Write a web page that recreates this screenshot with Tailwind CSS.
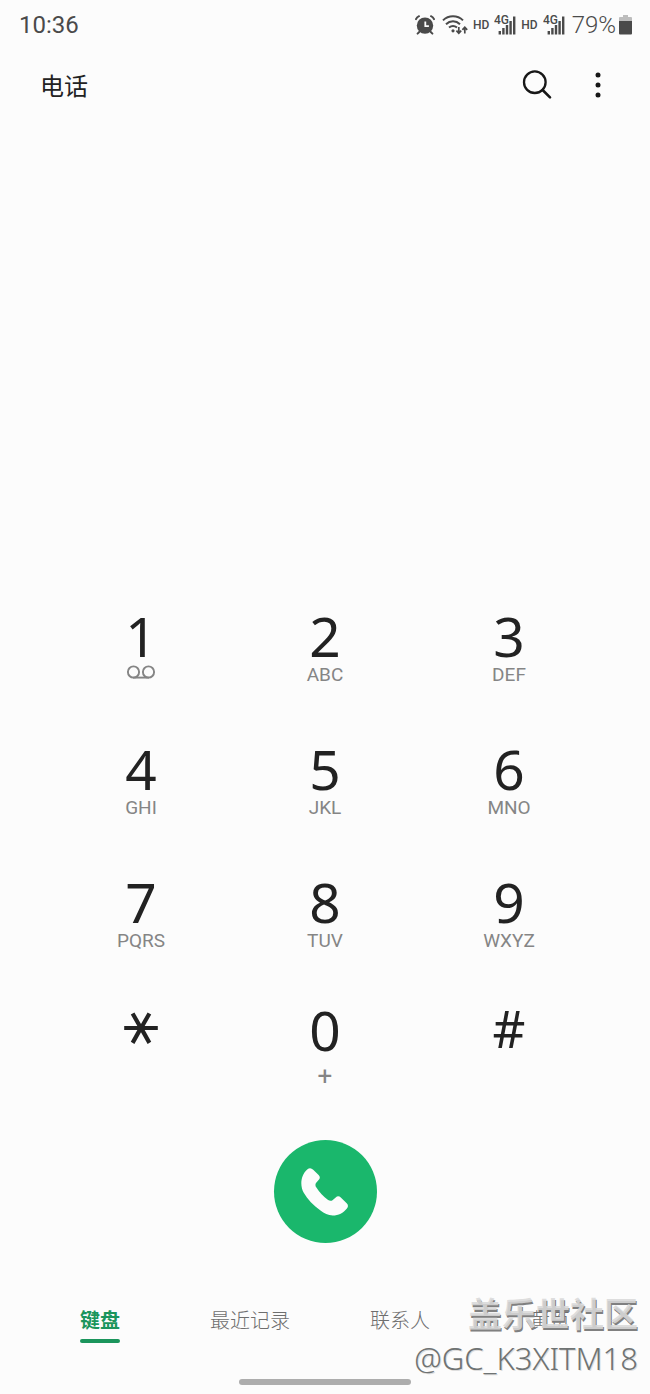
<!DOCTYPE html>
<html lang="zh-CN">
  <head>
    <meta charset="UTF-8" />
    <title>电话</title>
    <meta name="viewport" content="width=device-width, initial-scale=1.0" />
    <script src="https://cdn.jsdelivr.net/npm/@tailwindcss/browser@4"></script>
  </head>
  <body class="bg-[#fcfcfc] font-[Roboto,'Noto_Sans_CJK_SC',sans-serif] text-[#222222]">
    <div class="relative flex min-h-screen flex-col">
      <!-- Status bar -->
      <div class="flex h-[50px] items-center justify-between pl-[19px] pr-[18px] text-2xl text-[#4a4a4a]">
        <span>10:36</span>
        <div class="flex items-center">
          <svg class="mr-[7px] h-5 w-5" viewBox="0 0 20 20" fill="none" stroke="currentColor" stroke-linecap="round">
            <circle cx="10" cy="10.6" r="8.2" fill="currentColor" stroke="none" />
            <path d="M10.3 6.4v4.8h3.6" stroke="#fcfcfc" stroke-width="1.8" stroke-linecap="butt" />
            <path d="M1 4.2C1.6 2.8 2.6 1.8 4 1.2M19 4.2C18.4 2.8 17.4 1.8 16 1.2M4.2 17l-1.6 1.6M15.8 17l1.6 1.6" stroke-width="2" />
          </svg>
          <svg class="mr-[5px] h-5 w-[26px]" viewBox="0 0 26 20" fill="none" stroke="currentColor" stroke-width="2">
            <path d="M1 5.4C6.6 0 15.4 0 21 5.4M4 9.2C8 5.4 14 5.4 18 9.2M7 12.6c2.4-2 5.6-2 8 0" />
            <circle cx="11" cy="15.8" r="1.6" fill="currentColor" stroke="none" />
            <path d="M16.8 12v6M14.4 15.6l2.4 2.6 2.4-2.6M22.8 18.4v-6M20.4 14.8l2.4-2.6 2.4 2.6" stroke-width="1.7" />
          </svg>
          <span class="mr-[5px] text-[12px] font-medium">HD</span>
          <svg class="mr-[5px] h-[22px] w-[22px]" viewBox="0 0 22 22">
            <text x="0" y="10" font-size="12" font-weight="500" fill="currentColor">4G</text>
            <path d="M4.6 17h2.4v3.4H4.600zM8.200 14h2.400v6.400H8.200zM11.800 11h2.400v9.400h-2.400zM15.400 7h2.400v13.400h-2.400zM19 2.500h2.400v17.900H19z" fill="currentColor" />
          </svg>
          <span class="mr-[5px] text-[12px] font-medium">HD</span>
          <svg class="mr-[7px] h-[22px] w-[22px]" viewBox="0 0 22 22">
            <text x="0" y="10" font-size="12" font-weight="500" fill="currentColor">4G</text>
            <path d="M4.6 17h2.4v3.4H4.600zM8.200 14h2.400v6.400H8.200zM11.800 11h2.400v9.400h-2.400zM15.400 7h2.400v13.400h-2.400zM19 2.500h2.400v17.900H19z" fill="currentColor" />
          </svg>
          <span class="mr-[3px] font-light">79%</span>
          <svg class="h-5 w-[13px]" viewBox="0 0 13 20">
            <path d="M4 0h5v2h3a1 1 0 0 1 1 1v3H0V3a1 1 0 0 1 1-1h3z" fill="#bdbdbd" />
            <path d="M0 6h13v12.5a1 1 0 0 1-1 1H1a1 1 0 0 1-1-1z" fill="currentColor" />
          </svg>
        </div>
      </div>

      <header class="flex h-[70px] items-center justify-between pl-10 pr-[38px]">
        <h1 class="pt-1 text-2xl">电话</h1>
        <div class="flex items-center gap-8">
          <button type="button" aria-label="搜索">
            <svg class="h-[30px] w-[30px]" viewBox="0 0 30 30" fill="none" stroke="#171717" stroke-width="2.3" stroke-linecap="round">
              <circle cx="12.8" cy="12.2" r="10.8" />
              <path d="M20.6 20l7.4 7.4" stroke-width="2.6" />
            </svg>
          </button>
          <button type="button" aria-label="更多选项">
            <svg class="h-[30px] w-7" viewBox="0 0 28 30" fill="#171717">
              <circle cx="14" cy="5" r="2.5" />
              <circle cx="14" cy="15" r="2.5" />
              <circle cx="14" cy="25" r="2.5" />
            </svg>
          </button>
        </div>
      </header>

      <main class="flex flex-1 flex-col justify-end">
        <!-- Keypad -->
        <div class="grid grid-cols-3 gap-y-[53px] px-[49px] font-['Noto_Sans',sans-serif] text-[55px] leading-[56px]">
          <button type="button" class="flex h-20 flex-col items-center">
            1
            <svg class="h-6 w-[30px]" viewBox="0 0 30 24" fill="none" stroke="#858585" stroke-width="1.9">
              <circle cx="7.5" cy="8" r="5.6" />
              <circle cx="22.5" cy="8" r="5.6" />
              <path d="M7 13.6h16" />
            </svg>
          </button>
          <button type="button" class="flex h-20 flex-col items-center">2<span class="font-[Roboto,sans-serif] text-[19px] leading-[22px] text-[#858585]">ABC</span></button>
          <button type="button" class="flex h-20 flex-col items-center">3<span class="font-[Roboto,sans-serif] text-[19px] leading-[22px] text-[#858585]">DEF</span></button>
          <button type="button" class="flex h-20 flex-col items-center">4<span class="font-[Roboto,sans-serif] text-[19px] leading-[22px] text-[#858585]">GHI</span></button>
          <button type="button" class="flex h-20 flex-col items-center">5<span class="font-[Roboto,sans-serif] text-[19px] leading-[22px] text-[#858585]">JKL</span></button>
          <button type="button" class="flex h-20 flex-col items-center">6<span class="font-[Roboto,sans-serif] text-[19px] leading-[22px] text-[#858585]">MNO</span></button>
          <button type="button" class="flex h-20 flex-col items-center">7<span class="font-[Roboto,sans-serif] text-[19px] leading-[22px] text-[#858585]">PQRS</span></button>
          <button type="button" class="flex h-20 flex-col items-center">8<span class="font-[Roboto,sans-serif] text-[19px] leading-[22px] text-[#858585]">TUV</span></button>
          <button type="button" class="flex h-20 flex-col items-center">9<span class="font-[Roboto,sans-serif] text-[19px] leading-[22px] text-[#858585]">WXYZ</span></button>
        </div>
        <div class="mt-12 grid grid-cols-3 px-[49px] font-['Noto_Sans',sans-serif] text-[55px] leading-[56px]">
          <button type="button" class="flex flex-col items-center font-['DejaVu_Sans',sans-serif] text-6xl leading-10">⚹</button>
          <button type="button" class="flex flex-col items-center">0<span class="pt-2 font-[Roboto,sans-serif] text-[26px] leading-5 text-[#858585]">+</span></button>
          <button type="button" class="flex flex-col items-center text-[51px] leading-[52px]">#</button>
        </div>

        <button type="button" aria-label="拨打" class="mx-auto mt-[54px] flex h-[103px] w-[103px] items-center justify-center rounded-full bg-[#1ab76c]">
          <svg class="h-12 w-12" viewBox="0 0 48 48" fill="#fcfcfc">
            <path d="M6.2 1.6C8.4-.3 10.2-.1 12.2 1.8l5.4 5.3c1.7 1.7 1.5 3.4.2 4.7l-2.6 3c-1.3 1.6-.8 3.3.2 4.8 3 4.7 7 9 11.7 12.3 1.5 1 3.2 1.2 4.7 0l2.9-2.5c1.7-1.4 3.5-1.4 5.1.2l5.9 5.7c1.7 1.7 1.6 3.6.2 5.2-3.6 4.4-8.3 7-14.2 7-4.6 0-8.5-2-12.2-4.9C12.4 37.5 6.5 31.2 2.6 24.5-.8 18.6-1 8.2 6.2 1.6z" />
          </svg>
        </button>

        <nav class="mt-[63px] grid grid-cols-4 px-[25px] text-center text-xl leading-[30px] text-[#6e6e6e]">
          <a href="#keypad" class="mx-auto flex flex-col gap-[3px] font-bold text-[#1b955c] after:h-1 after:rounded-full after:bg-[#1b955c]">键盘</a>
          <a href="#recents" class="font-light">最近记录</a>
          <a href="#contacts" class="font-light">联系人</a>
          <a href="#places" class="font-light">黄页</a>
        </nav>
        <div class="mx-auto mt-9 mb-[9px] h-[6px] w-[172px] rounded-full bg-[#adadad]"></div>
      </main>

      <!-- Watermark -->
      <div class="pointer-events-none absolute right-3 bottom-4 text-right">
        <p class="text-[34px] leading-[46px] font-bold text-[#d9d9d9]/90 [text-shadow:1px_2px_0_#808080]">盖乐世社区</p>
        <p class="font-['Noto_Sans',sans-serif] text-[31px] leading-10 font-light text-[#6f7373] [text-shadow:1px_1px_0_#dedede]">@GC_K3XITM18</p>
      </div>
    </div>
  </body>
</html>
